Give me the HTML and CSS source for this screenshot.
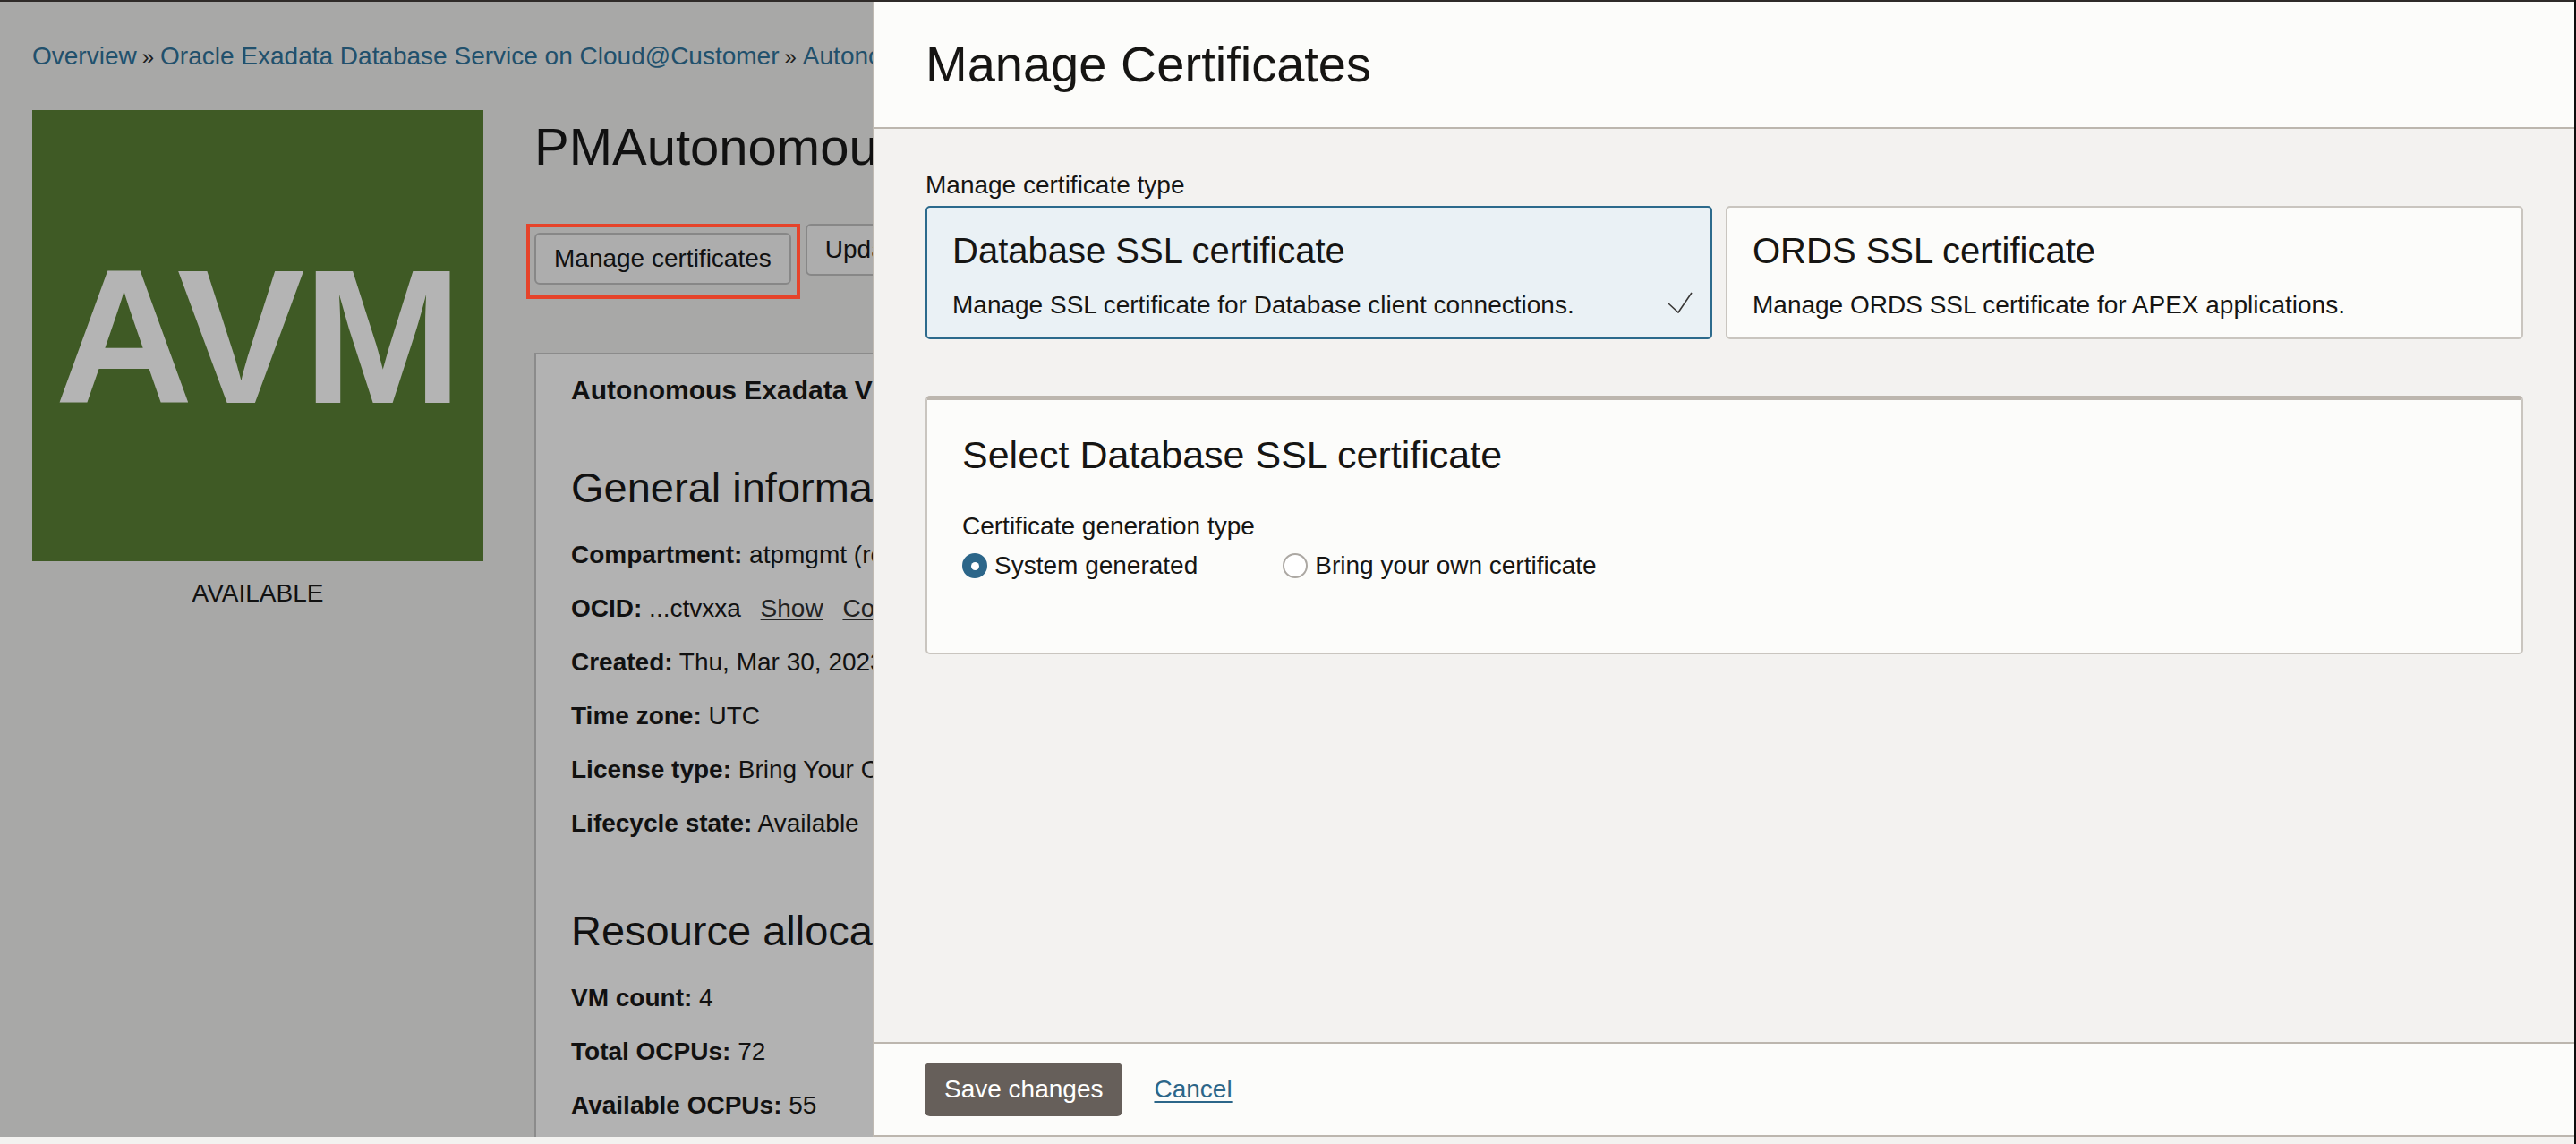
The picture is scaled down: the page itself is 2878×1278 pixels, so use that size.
FILE: index.html
```html
<!DOCTYPE html>
<html lang="en">
<head>
<meta charset="utf-8">
<title>Manage Certificates</title>
<link rel="stylesheet" href="styles.css">
</head>
<body>
<div class="screen">
  <div class="topbar"></div>
  <div class="stage">
    <div class="page">
      <nav class="crumbs">
        <a class="crumb">Overview</a><span class="sep">»</span><a class="crumb">Oracle Exadata Database Service on Cloud@Customer</a><span class="sep">»</span><a class="crumb">Autonomous Exadata VM Clusters</a>
      </nav>
      <div class="layout">
        <aside class="side">
          <div class="tile">AVM</div>
          <div class="state">AVAILABLE</div>
        </aside>
        <main class="content">
          <h1 class="page-title">PMAutonomousVMCluster</h1>
          <div class="actions">
            <span class="highlight"><button class="btn">Manage certificates</button></span>
            <button class="btn">Update license type</button>
          </div>
          <section class="details">
            <div class="dtitle">Autonomous Exadata VM Cluster information</div>
            <h2 class="dhead">General information</h2>
            <div class="row"><b>Compartment:</b> atpmgmt (root)/pm</div>
            <div class="row"><b>OCID:</b> ...ctvxxa <a class="ln">Show</a> <a class="ln">Copy</a></div>
            <div class="row"><b>Created:</b> Thu, Mar 30, 2023, 18:02:11 UTC</div>
            <div class="row"><b>Time zone:</b> UTC</div>
            <div class="row"><b>License type:</b> Bring Your Own License</div>
            <div class="row"><b>Lifecycle state:</b> Available</div>
            <h2 class="dhead dhead2">Resource allocation</h2>
            <div class="row"><b>VM count:</b> 4</div>
            <div class="row"><b>Total OCPUs:</b> 72</div>
            <div class="row"><b>Available OCPUs:</b> 55</div>
          </section>
        </main>
      </div>
    </div>

    <div class="drawer">
      <header class="dr-head">
        <h1 class="dr-title">Manage Certificates</h1>
      </header>
      <div class="dr-body">
        <div class="lbl">Manage certificate type</div>
        <div class="cards">
          <div class="card card-on">
            <div class="card-title">Database SSL certificate</div>
            <div class="card-desc">
              <span>Manage SSL certificate for Database client connections.</span>
              <svg class="check" width="30" height="24" viewBox="0 0 30 24"><polyline points="2,13 13,23 28,1" fill="none" stroke="#3a3836" stroke-width="1.6"/></svg>
            </div>
          </div>
          <div class="card">
            <div class="card-title">ORDS SSL certificate</div>
            <div class="card-desc"><span>Manage ORDS SSL certificate for APEX applications.</span></div>
          </div>
        </div>
        <section class="box">
          <h3 class="box-title">Select Database SSL certificate</h3>
          <div class="lbl lbl2">Certificate generation type</div>
          <div class="radios">
            <label class="radio"><span class="dot dot-on"></span>System generated</label>
            <label class="radio"><span class="dot"></span>Bring your own certificate</label>
          </div>
        </section>
      </div>
      <footer class="dr-foot">
        <button class="save">Save changes</button>
        <a class="cancel">Cancel</a>
      </footer>
    </div>
  </div>
  <div class="bottomstrip"></div>
</div>
<div class="edge"></div>
</body>
</html>
```

FILE: styles.css
```css
* { box-sizing: border-box; }
html, body { margin: 0; padding: 0; }
body {
  width: 2878px;
  height: 1278px;
  overflow: hidden;
  display: flex;
  font-family: "Liberation Sans", Arial, sans-serif;
  font-size: 28px;
  color: #111;
  background: #a8a8a7;
}
.screen {
  flex: 1;
  display: flex;
  flex-direction: column;
  min-width: 0;
}
.edge { width: 2px; background: #0d0d0d; }
.topbar { height: 2px; background: #2f2b29; }
.bottomstrip { height: 8px; background: #f3f2f0; }
.stage {
  flex: 1;
  position: relative;
  overflow: hidden;
  background: #a8a8a7;
}

/* underlying dimmed page (only the part left of the drawer is visible) */
.page {
  width: 975px;
  height: 100%;
  overflow: hidden;
  padding: 44px 0 0 36px;
}
.crumbs {
  line-height: 34px;
  white-space: nowrap;
  color: #21506c;
  overflow: hidden;
}
.crumb { color: #21506c; }
.sep { color: #1d1d1d; margin: 0 7px 0 6px; font-size: 24px; }
.layout {
  display: flex;
  gap: 57px;
  margin-top: 42px;
}
.side { width: 504px; flex: none; }
.tile {
  width: 504px;
  height: 504px;
  background: #3f5a25;
  color: #b4b4b4;
  font-weight: bold;
  font-size: 214px;
  letter-spacing: -2px;
  line-height: 1;
  padding-top: 146px;
  display: flex;
  align-items: flex-start;
  justify-content: center;
}
.state {
  text-align: center;
  margin-top: 19px;
  line-height: 34px;
  color: #111;
}
.content { flex: 1; min-width: 0; }
.page-title {
  margin: 9px 0 0;
  font-size: 58px;
  font-weight: normal;
  line-height: 64px;
  white-space: nowrap;
  overflow: hidden;
  color: #111;
}
.actions {
  display: flex;
  align-items: flex-start;
  gap: 6px;
  margin-top: 54px;
  overflow: hidden;
  padding-left: 9px;
  margin-left: -9px;
}
.highlight {
  display: inline-flex;
  flex: none;
  border: 4px solid #e6432a;
  padding: 6px 6px 12px 5px;
  margin-left: -9px;
}
.btn {
  flex: none;
  height: 58px;
  padding: 0 20px;
  border: 2px solid #878787;
  border-radius: 6px;
  background: #adadad;
  font: inherit;
  font-size: 28px;
  color: #111;
  white-space: nowrap;
}
.details {
  margin-top: 60px;
  height: 1200px;
  border: 2px solid #8b8b8b;
  border-right: none;
  background: #b2b2b2;
  padding: 23px 0 23px 39px;
  white-space: nowrap;
  overflow: hidden;
}
.dtitle { font-weight: bold; font-size: 30px; line-height: 34px; }
.dhead {
  margin: 66px 0 0;
  font-size: 47px;
  font-weight: normal;
  line-height: 52px;
}
.dhead2 { margin-top: 64px; }
.dhead + .row { margin-top: 19px; }
.row { line-height: 60px; }
.ln { text-decoration: underline; color: #222; margin-left: 14px; }

/* drawer */
.drawer {
  position: absolute;
  top: 0;
  bottom: 0;
  left: 975px;
  right: 0;
  border-left: 2px solid #bfbab3;
  display: flex;
  flex-direction: column;
  color: #161513;
}
.dr-head {
  height: 142px;
  flex: none;
  background: #fcfcfa;
  border-bottom: 2px solid #bcb6ae;
  padding: 0 57px;
  display: flex;
  align-items: center;
}
.dr-title {
  margin: 0;
  font-size: 56px;
  font-weight: normal;
  line-height: 64px;
}
.dr-body {
  flex: 1;
  background: #f3f2f0;
  padding: 46px 57px 0;
}
.lbl { line-height: 34px; }
.cards {
  display: grid;
  grid-template-columns: 879px 1fr;
  gap: 15px;
  margin-top: 6px;
}
.card {
  height: 149px;
  border: 2px solid #c9c5bf;
  border-radius: 5px;
  background: #fcfcfa;
  padding: 25px 19px 0 28px;
}
.card-on {
  border-color: #2c6a8c;
  background: #eaf1f5;
}
.card-title { font-size: 40px; line-height: 46px; }
.card-desc {
  margin-top: 21px;
  line-height: 34px;
  display: flex;
  justify-content: space-between;
  align-items: center;
}
.check { flex: none; margin-top: -6px; }
.box {
  margin-top: 63px;
  border: 2px solid #c9c5bf;
  border-top: 5px solid #bcb6ae;
  border-radius: 5px;
  background: #fcfcfa;
  padding: 36px 40px 80px 39px;
}
.box-title {
  margin: 0;
  font-size: 43px;
  font-weight: normal;
  line-height: 50px;
}
.lbl2 { margin-top: 38px; }
.radios {
  display: flex;
  gap: 95px;
  margin-top: 10px;
  line-height: 34px;
}
.radio { display: inline-flex; align-items: center; gap: 8px; }
.dot {
  width: 28px;
  height: 28px;
  border-radius: 50%;
  border: 2px solid #aca8a3;
  background: #fff;
  display: inline-flex;
  align-items: center;
  justify-content: center;
}
.dot-on { background: #2c6689; border-color: #2c6689; }
.dot-on::after {
  content: "";
  width: 9px;
  height: 9px;
  border-radius: 50%;
  background: #fff;
}
.dr-foot {
  height: 106px;
  flex: none;
  background: #fcfcfa;
  border-top: 2px solid #bcb6ae;
  border-bottom: 2px solid #bcb6ae;
  padding: 0 56px;
  display: flex;
  align-items: center;
  gap: 35px;
}
.save {
  height: 60px;
  padding: 0 22px;
  border: none;
  border-radius: 6px;
  background: #665f5a;
  color: #fff;
  font: inherit;
  font-size: 28px;
}
.cancel {
  color: #2c6689;
  text-decoration: underline;
  text-underline-offset: 4px;
}
```
